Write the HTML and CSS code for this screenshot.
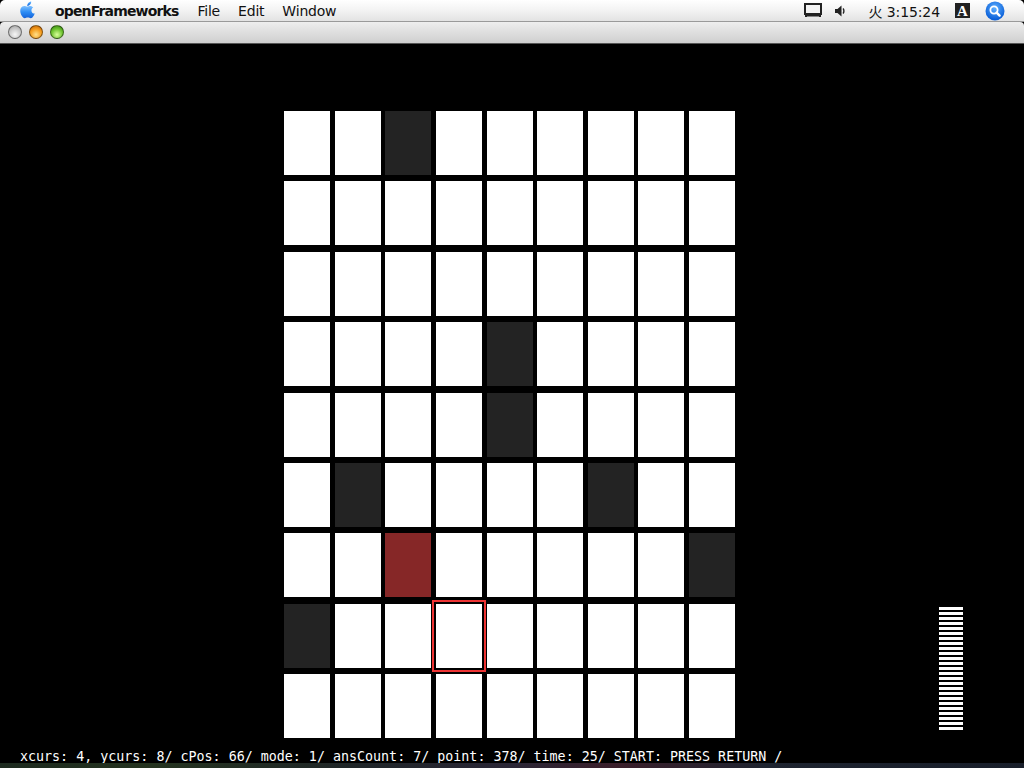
FILE: index.html
```html
<!DOCTYPE html>
<html>
<head>
<meta charset="utf-8">
<link rel="stylesheet" href="styles.css">
</head>
<body>
<div class="screen">
  <div class="menubar">
    <div class="menu-left">
      <svg class="apple" width="16" height="18" viewBox="0 0 16 18">
        <defs>
          <linearGradient id="ag" x1="0" y1="0" x2="0" y2="1">
            <stop offset="0" stop-color="#7fc0ff"/>
            <stop offset="0.5" stop-color="#2d8df5"/>
            <stop offset="1" stop-color="#1562d8"/>
          </linearGradient>
        </defs>
        <path d="M11.2 0.5c0.1 1.2-0.4 2.3-1.1 3.1-0.7 0.8-1.8 1.4-2.8 1.3-0.1-1.1 0.4-2.3 1.1-3 0.7-0.8 1.9-1.4 2.8-1.4z" fill="url(#ag)"/>
        <path d="M14.8 12.6c-0.4 0.9-0.6 1.3-1.1 2.1-0.7 1.1-1.7 2.5-3 2.5-1.1 0-1.4-0.7-2.900-0.7-1.5 0-1.9 0.7-3 0.7-1.3 0-2.2-1.3-2.9-2.3C0 12 -0.2 8.7 0.9 6.9 1.7 5.6 3 4.9 4.2 4.9c1.2 0 2 0.7 3 0.7 1 0 1.6-0.7 3-0.7 1.1 0 2.2 0.6 3 1.6-2.6 1.4-2.2 5.2 0.6 6.1z" fill="url(#ag)"/>
      </svg>
      <span class="menu-item app">openFrameworks</span>
      <span class="menu-item">File</span>
      <span class="menu-item">Edit</span>
      <span class="menu-item">Window</span>
    </div>
    <div class="menu-right">
      <svg class="disp" width="18" height="15" viewBox="0 0 18 15">
        <rect x="1" y="1" width="16" height="10" fill="#f4f4f4" stroke="#222" stroke-width="2"/>
        <rect x="1" y="11" width="2" height="3" fill="#222"/>
        <rect x="15" y="11" width="2" height="3" fill="#222"/>
        <rect x="1" y="12" width="16" height="1.5" fill="#222"/>
      </svg>
      <svg class="spk" width="11" height="12" viewBox="0 0 11 12">
        <path d="M0 4h2.5l4-3.5v11l-4-3.5H0z" fill="#222"/>
        <path d="M8 3.5c1.2 1.2 1.2 3.8 0 5" fill="none" stroke="#222" stroke-width="1.4"/>
      </svg>
      <span class="clock">火 3:15:24</span>
      <span class="abox">A</span>
      <span class="spot">
        <svg width="20" height="20" viewBox="0 0 20 20">
          <defs>
            <radialGradient id="sg" cx="0.5" cy="0.35" r="0.6">
              <stop offset="0" stop-color="#5fb0ff"/>
              <stop offset="1" stop-color="#0a5fd8"/>
            </radialGradient>
          </defs>
          <circle cx="10" cy="10" r="9.5" fill="url(#sg)"/>
          <circle cx="9" cy="9" r="3.6" fill="none" stroke="#fff" stroke-width="1.8"/>
          <path d="M11.6 11.6l3 3" stroke="#fff" stroke-width="2.4" stroke-linecap="round"/>
        </svg>
      </span>
    </div>
  </div>
  <div class="titlebar">
    <span class="light gray"></span>
    <span class="light orange"></span>
    <span class="light green"></span>
  </div>
  <div class="content">
    <div class="canvas-row">
      <div class="grid">
        <div class="cell"></div><div class="cell"></div><div class="cell dark"></div><div class="cell"></div><div class="cell"></div><div class="cell"></div><div class="cell"></div><div class="cell"></div><div class="cell"></div>
        <div class="cell"></div><div class="cell"></div><div class="cell"></div><div class="cell"></div><div class="cell"></div><div class="cell"></div><div class="cell"></div><div class="cell"></div><div class="cell"></div>
        <div class="cell"></div><div class="cell"></div><div class="cell"></div><div class="cell"></div><div class="cell"></div><div class="cell"></div><div class="cell"></div><div class="cell"></div><div class="cell"></div>
        <div class="cell"></div><div class="cell"></div><div class="cell"></div><div class="cell"></div><div class="cell dark"></div><div class="cell"></div><div class="cell"></div><div class="cell"></div><div class="cell"></div>
        <div class="cell"></div><div class="cell"></div><div class="cell"></div><div class="cell"></div><div class="cell dark"></div><div class="cell"></div><div class="cell"></div><div class="cell"></div><div class="cell"></div>
        <div class="cell"></div><div class="cell dark"></div><div class="cell"></div><div class="cell"></div><div class="cell"></div><div class="cell"></div><div class="cell dark"></div><div class="cell"></div><div class="cell"></div>
        <div class="cell"></div><div class="cell"></div><div class="cell red"></div><div class="cell"></div><div class="cell"></div><div class="cell"></div><div class="cell"></div><div class="cell"></div><div class="cell dark"></div>
        <div class="cell dark"></div><div class="cell"></div><div class="cell"></div><div class="cell cursor"></div><div class="cell"></div><div class="cell"></div><div class="cell"></div><div class="cell"></div><div class="cell"></div>
        <div class="cell"></div><div class="cell"></div><div class="cell"></div><div class="cell"></div><div class="cell"></div><div class="cell"></div><div class="cell"></div><div class="cell"></div><div class="cell"></div>
      </div>
      <div class="stack"></div>
    </div>
    <div class="status">xcurs: 4, ycurs: 8/ cPos: 66/ mode: 1/ ansCount: 7/ point: 378/ time: 25/ START: PRESS RETURN /</div>
  </div>
  <div class="desktop"></div>
</div>
</body>
</html>
```

FILE: styles.css
```css
html, body {
  margin: 0;
  padding: 0;
  background: #000;
}
.screen {
  width: 1024px;
  height: 768px;
  overflow: hidden;
  display: flex;
  flex-direction: column;
  background: #000;
}
.menubar {
  height: 22px;
  flex: none;
  display: flex;
  justify-content: space-between;
  align-items: center;
  background: linear-gradient(#ffffff, #f4f4f4 45%, #e3e3e3 100%);
  border-radius: 5px 5px 0 0;
  box-sizing: border-box;
  border-bottom: 1px solid #9a9a9a;
  font-family: "DejaVu Sans", "Noto Sans CJK JP", sans-serif;
  font-size: 14px;
  color: #111;
}
.menu-left {
  display: flex;
  align-items: center;
  height: 100%;
}
.apple {
  margin-left: 20px;
  margin-right: 19px;
  margin-top: -1px;
}
.menu-item {
  margin-right: 18px;
  letter-spacing: -0.2px;
}
.menu-item.app {
  font-weight: bold;
  margin-right: 19px;
  letter-spacing: -0.85px;
}
.menu-right {
  display: flex;
  align-items: center;
  height: 100%;
  padding-right: 19px;
}
.disp {
  margin-right: 13px;
}
.spk {
  margin-right: 22px;
}
.clock {
  margin-right: 15px;
  letter-spacing: -0.1px;
}
.abox {
  width: 15px;
  height: 15px;
  background: #222;
  color: #fff;
  font-family: "Liberation Serif", serif;
  font-weight: bold;
  font-size: 15px;
  line-height: 16px;
  text-align: center;
  margin-right: 15px;
}
.spot {
  display: flex;
}
.titlebar {
  height: 22px;
  flex: none;
  box-sizing: border-box;
  display: flex;
  align-items: center;
  gap: 7px;
  padding-left: 8px;
  padding-bottom: 1px;
  background: linear-gradient(#eeeeee, #dedede 50%, #cfcfcf);
  border-bottom: 1px solid #555;
  border-radius: 4px 4px 0 0;
}
.light {
  width: 14px;
  height: 14px;
  border-radius: 50%;
  box-sizing: border-box;
  border: 1px solid rgba(0,0,0,0.45);
}
.light.gray {
  background: radial-gradient(circle at 50% 70%, #f6f6f6, #c9c9c9 55%, #9d9d9d);
}
.light.orange {
  background: radial-gradient(circle at 50% 72%, #ffe08a, #f49a1a 55%, #b85a06);
}
.light.green {
  background: radial-gradient(circle at 50% 72%, #d8ff9a, #6cc22e 55%, #2f7c10);
}
.content {
  height: 719px;
  flex: none;
  background: #000;
  display: flex;
  flex-direction: column;
}
.canvas-row {
  display: flex;
  align-items: flex-start;
  padding-top: 67px;
}
.grid {
  margin-left: 284px;
  display: grid;
  grid-template-columns: repeat(9, 46px);
  grid-auto-rows: 64px;
  column-gap: 4.625px;
  row-gap: 6.375px;
}
.cell {
  background: #ffffff;
}
.cell.dark {
  background: #232323;
}
.cell.red {
  background: #862727;
}
.cell.cursor {
  outline: 2px solid #ee3434;
  outline-offset: 2px;
}
.stack {
  margin-left: 204px;
  margin-top: 496px;
  width: 24px;
  height: 123px;
  background: repeating-linear-gradient(#ffffff 0, #ffffff 3px, #000 3px, #000 5px);
}
.status {
  margin-top: 12px;
  margin-left: 20px;
  font-family: "DejaVu Sans Mono", monospace;
  font-size: 13.33px;
  line-height: 14px;
  color: #fff;
  white-space: pre;
}
.desktop {
  height: 5px;
  flex: none;
  background: linear-gradient(90deg, #1d2a1f 0%, #24331f 15%, #1f2528 35%, #2a2636 50%, #3a1e2a 60%, #1e2430 75%, #181e2a 100%);
}
```
